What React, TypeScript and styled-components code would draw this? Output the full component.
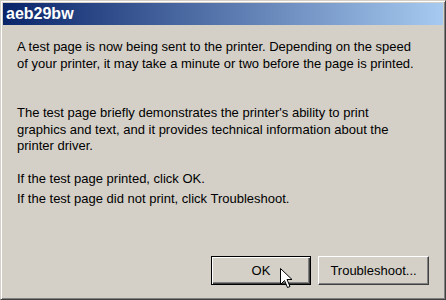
import React from 'react'
import styled, { createGlobalStyle } from 'styled-components'

const GlobalStyle = createGlobalStyle`
  html, body {
    margin: 0;
    padding: 0;
    background: #d4d0c8;
  }
`

const Window = styled.div`
  box-sizing: border-box;
  width: 446px;
  height: 300px;
  background: #d4d0c8;
  border: 1px solid;
  border-color: #d4d0c8 #404040 #404040 #d4d0c8;
  box-shadow: inset 1px 1px 0 #ffffff, inset -1px -1px 0 #808080;
  padding: 2px;
  display: flex;
  flex-direction: column;
  font-family: 'Liberation Sans', Arial, sans-serif;
  color: #000;
`

const TitleBar = styled.div`
  height: 22px;
  display: flex;
  align-items: center;
  padding-left: 3px;
  background: linear-gradient(to right, #0a246a, #a6caf0);
  color: #fff;
  font-weight: bold;
  font-size: 16px;
`

const Body = styled.div`
  flex: 1;
  display: flex;
  flex-direction: column;
  padding: 14px 14px 12px 14px;
  font-size: 13px;
`

const Paragraph = styled.p<{ $gap?: number }>`
  margin: 0 0 ${(p) => p.$gap ?? 0}px 0;
  line-height: 16.5px;
  white-space: nowrap;
`

const ButtonRow = styled.div`
  margin-top: auto;
  display: flex;
  justify-content: flex-end;
  gap: 7px;
`

const Button = styled.button<{ $default?: boolean; $width: number }>`
  position: relative;
  box-sizing: border-box;
  width: ${(p) => p.$width}px;
  height: 29px;
  background: #d4d0c8;
  font-family: 'Liberation Sans', Arial, sans-serif;
  font-size: 13px;
  color: #000;
  padding: 0;
  border: 1px solid;
  border-color: ${(p) => (p.$default ? '#000' : '#fff #404040 #404040 #fff')};
  box-shadow: ${(p) =>
    p.$default
      ? 'inset 1px 1px 0 #fff, inset -1px -1px 0 #404040, inset -2px -2px 0 #808080'
      : 'inset -1px -1px 0 #808080'};
`

const Cursor = styled.svg`
  position: absolute;
  left: 68px;
  top: 11px;
`

const Arrow = () => (
  <Cursor width="13" height="21" viewBox="0 0 13 21">
    <path
      d="M0.5 0.5 L0.5 16.5 L4.5 12.5 L7.5 19.5 L10 18.5 L7 11.5 L12 11.5 Z"
      fill="#fff"
      stroke="#000"
      strokeWidth="1"
    />
  </Cursor>
)

export default function App() {
  return (
    <>
      <GlobalStyle />
      <Window>
        <TitleBar>aeb29bw</TitleBar>
        <Body>
          <Paragraph $gap={33}>
            A test page is now being sent to the printer. Depending on the speed
            <br />
            of your printer, it may take a minute or two before the page is printed.
          </Paragraph>
          <Paragraph $gap={16.5}>
            The test page briefly demonstrates the printer's ability to print
            <br />
            graphics and text, and it provides technical information about the
            <br />
            printer driver.
          </Paragraph>
          <Paragraph $gap={3.5}>If the test page printed, click OK.</Paragraph>
          <Paragraph>If the test page did not print, click Troubleshoot.</Paragraph>
          <ButtonRow>
            <Button $default $width={100}>
              OK
              <Arrow />
            </Button>
            <Button $width={111}>Troubleshoot...</Button>
          </ButtonRow>
        </Body>
      </Window>
    </>
  )
}
